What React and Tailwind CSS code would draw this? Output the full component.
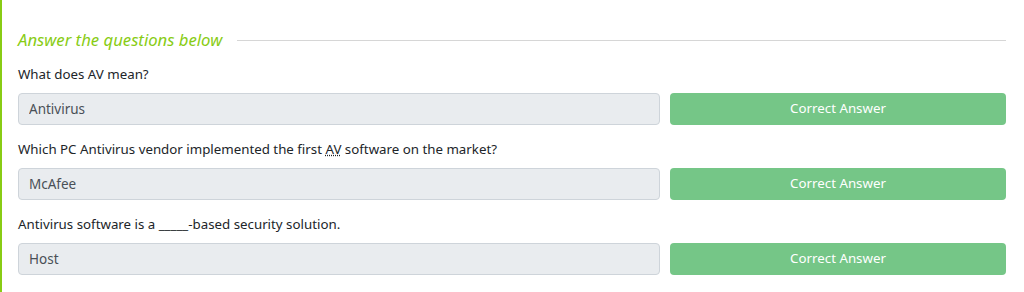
import React from 'react';

const questions = [
  { id: 1, text: <>What does AV mean?</>, answer: 'Antivirus' },
  {
    id: 2,
    text: (
      <>
        Which PC Antivirus vendor implemented the first <abbr title="Antivirus">AV</abbr> software on the market?
      </>
    ),
    answer: 'McAfee',
  },
  { id: 3, text: <>Antivirus software is a _____-based security solution.</>, answer: 'Host' },
];

const QuestionRow = ({ question }) => (
  <div className="mb-[14px]">
    <p className="text-[13.3px] leading-[21px] text-[#212529] mb-2">{question.text}</p>
    <div className="flex gap-[10px]">
      <input
        type="text"
        disabled
        value={question.answer}
        className="w-[642px] h-[32px] px-[10px] rounded-[4px] border border-[#ced4da] bg-[#e9ecef] text-[13.5px] text-[#495057]"
      />
      <button className="flex-1 h-[32px] rounded-[4px] bg-[#75c687] text-white text-[13.3px]">
        Correct Answer
      </button>
    </div>
  </div>
);

export default function App() {
  return (
    <div
      className="w-[1024px] h-[292px] bg-white border-l-[2px] border-[#88cc14] pl-[16px] pr-[18px] pt-[28px] overflow-hidden"
      style={{ fontFamily: '"Noto Sans", sans-serif' }}
    >
      {/* Section header */}
      <div className="flex items-center gap-[15px] mb-3">
        <h4 className="text-[16.7px] leading-[24px] italic text-[#88cc14]">Answer the questions below</h4>
        <div className="flex-1 h-px bg-[#d6d6d6]" />
      </div>

      {questions.map((q) => (
        <QuestionRow key={q.id} question={q} />
      ))}
    </div>
  );
}
